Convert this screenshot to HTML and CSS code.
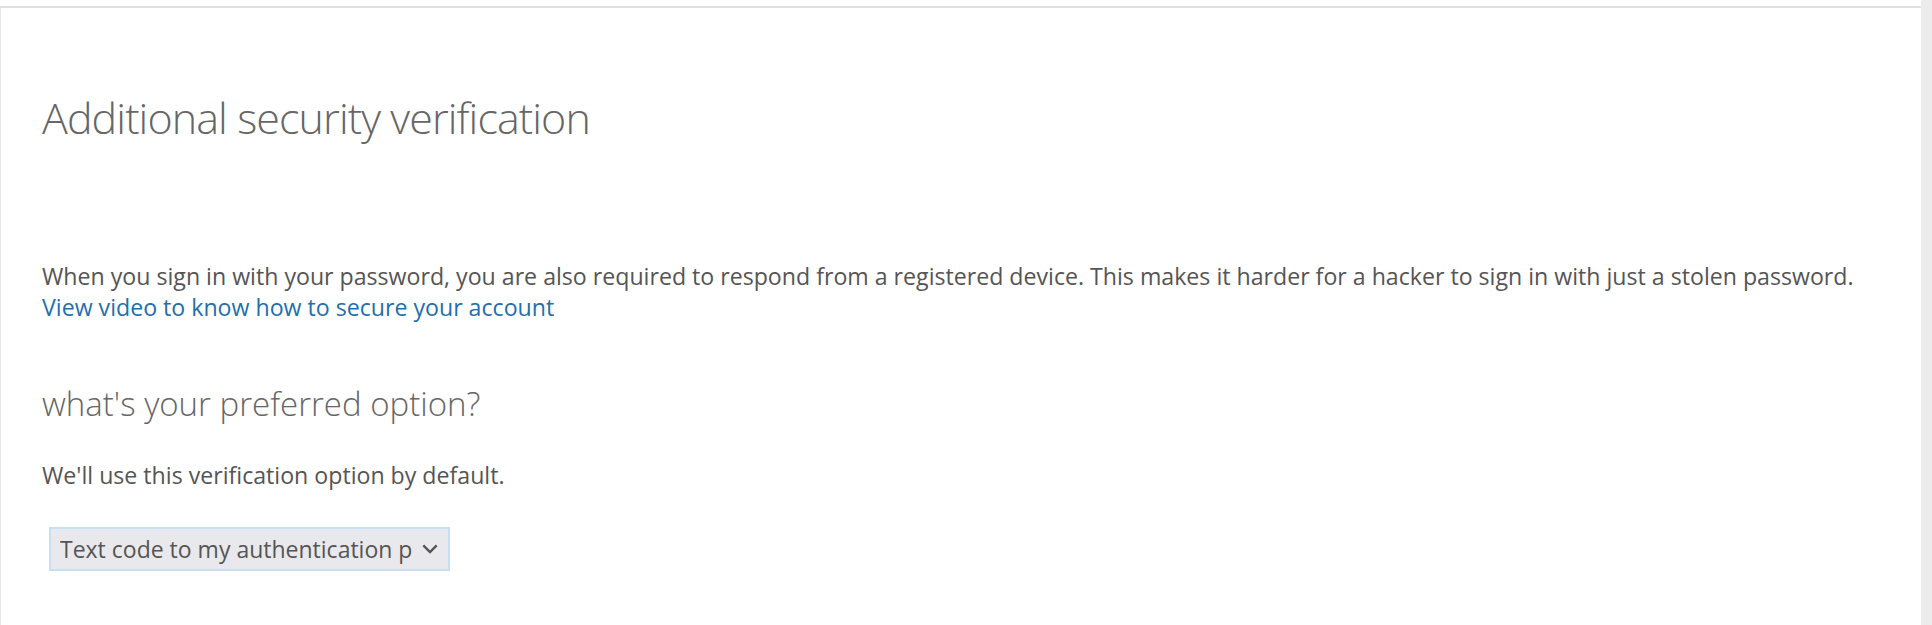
FILE: index.html
```html
<!DOCTYPE html>
<html lang="en">
<head>
<meta charset="utf-8">
<title>Additional security verification</title>
<link rel="stylesheet" href="styles.css">
</head>
<body>
<div class="page">
  <main class="main">
    <div class="card">
      <h1 class="title">Additional security verification</h1>
      <p class="intro">When you sign in with your password, you are also required to respond from a registered device. This makes it harder for a hacker to sign in with just a stolen password.<br><a class="link" href="#">View video to know how to secure your account</a></p>
      <h2 class="subtitle">what's your preferred option?</h2>
      <p class="note">We'll use this verification option by default.</p>
      <div class="select">
        <span class="select-text">Text code to my authentication phone</span>
        <svg class="chevron" width="16" height="10" viewBox="0 0 16 10"><path d="M1.3 1.3 L8 8 L14.7 1.3" fill="none" stroke="#555" stroke-width="2.4"/></svg>
      </div>
    </div>
  </main>
  <div class="scroll"></div>
</div>
</body>
</html>
```
FILE: styles.css
```css
html, body {
  margin: 0;
  padding: 0;
  background: #fff;
}
body {
  font-family: "Open Sans", "Noto Sans", sans-serif;
  color: #555;
}
.page {
  display: flex;
  height: 625px;
  overflow: hidden;
}
.main {
  flex: 1;
  padding-top: 6px;
}
.scroll {
  width: 11px;
  background: #ececec;
}
.card {
  border-top: 2px solid #dde1e5;
  border-left: 1px solid #e6e6e6;
  height: 100%;
  padding-left: 41px;
}
.title {
  margin: 0;
  padding-top: 80px;
  font-size: 43px;
  letter-spacing: -0.9px;
  font-weight: 300;
  color: #666;
  line-height: 60px;
}
.intro {
  margin: 113px 0 0;
  font-size: 23.15px;
  line-height: 31px;
  color: #555;
}
.link {
  color: #236fab;
  text-decoration: none;
}
.subtitle {
  margin: 59px 0 0;
  font-size: 33px;
  font-weight: 300;
  color: #666;
  line-height: 44px;
}
.note {
  margin: 34px 0 0;
  font-size: 23.15px;
  line-height: 31px;
}
.select {
  margin: 36px 0 0 7px;
  height: 40px;
  width: 378px;
  border: 2px solid #c7dff2;
  background: #e9e9ed;
  display: flex;
  align-items: center;
  padding: 0 10px 0 9px;
  box-sizing: content-box;
}
.select-text {
  flex: 1;
  overflow: hidden;
  white-space: nowrap;
  font-size: 23px;
  color: #555;
}
.chevron {
  margin-left: 8px;
  flex: none;
}
```
